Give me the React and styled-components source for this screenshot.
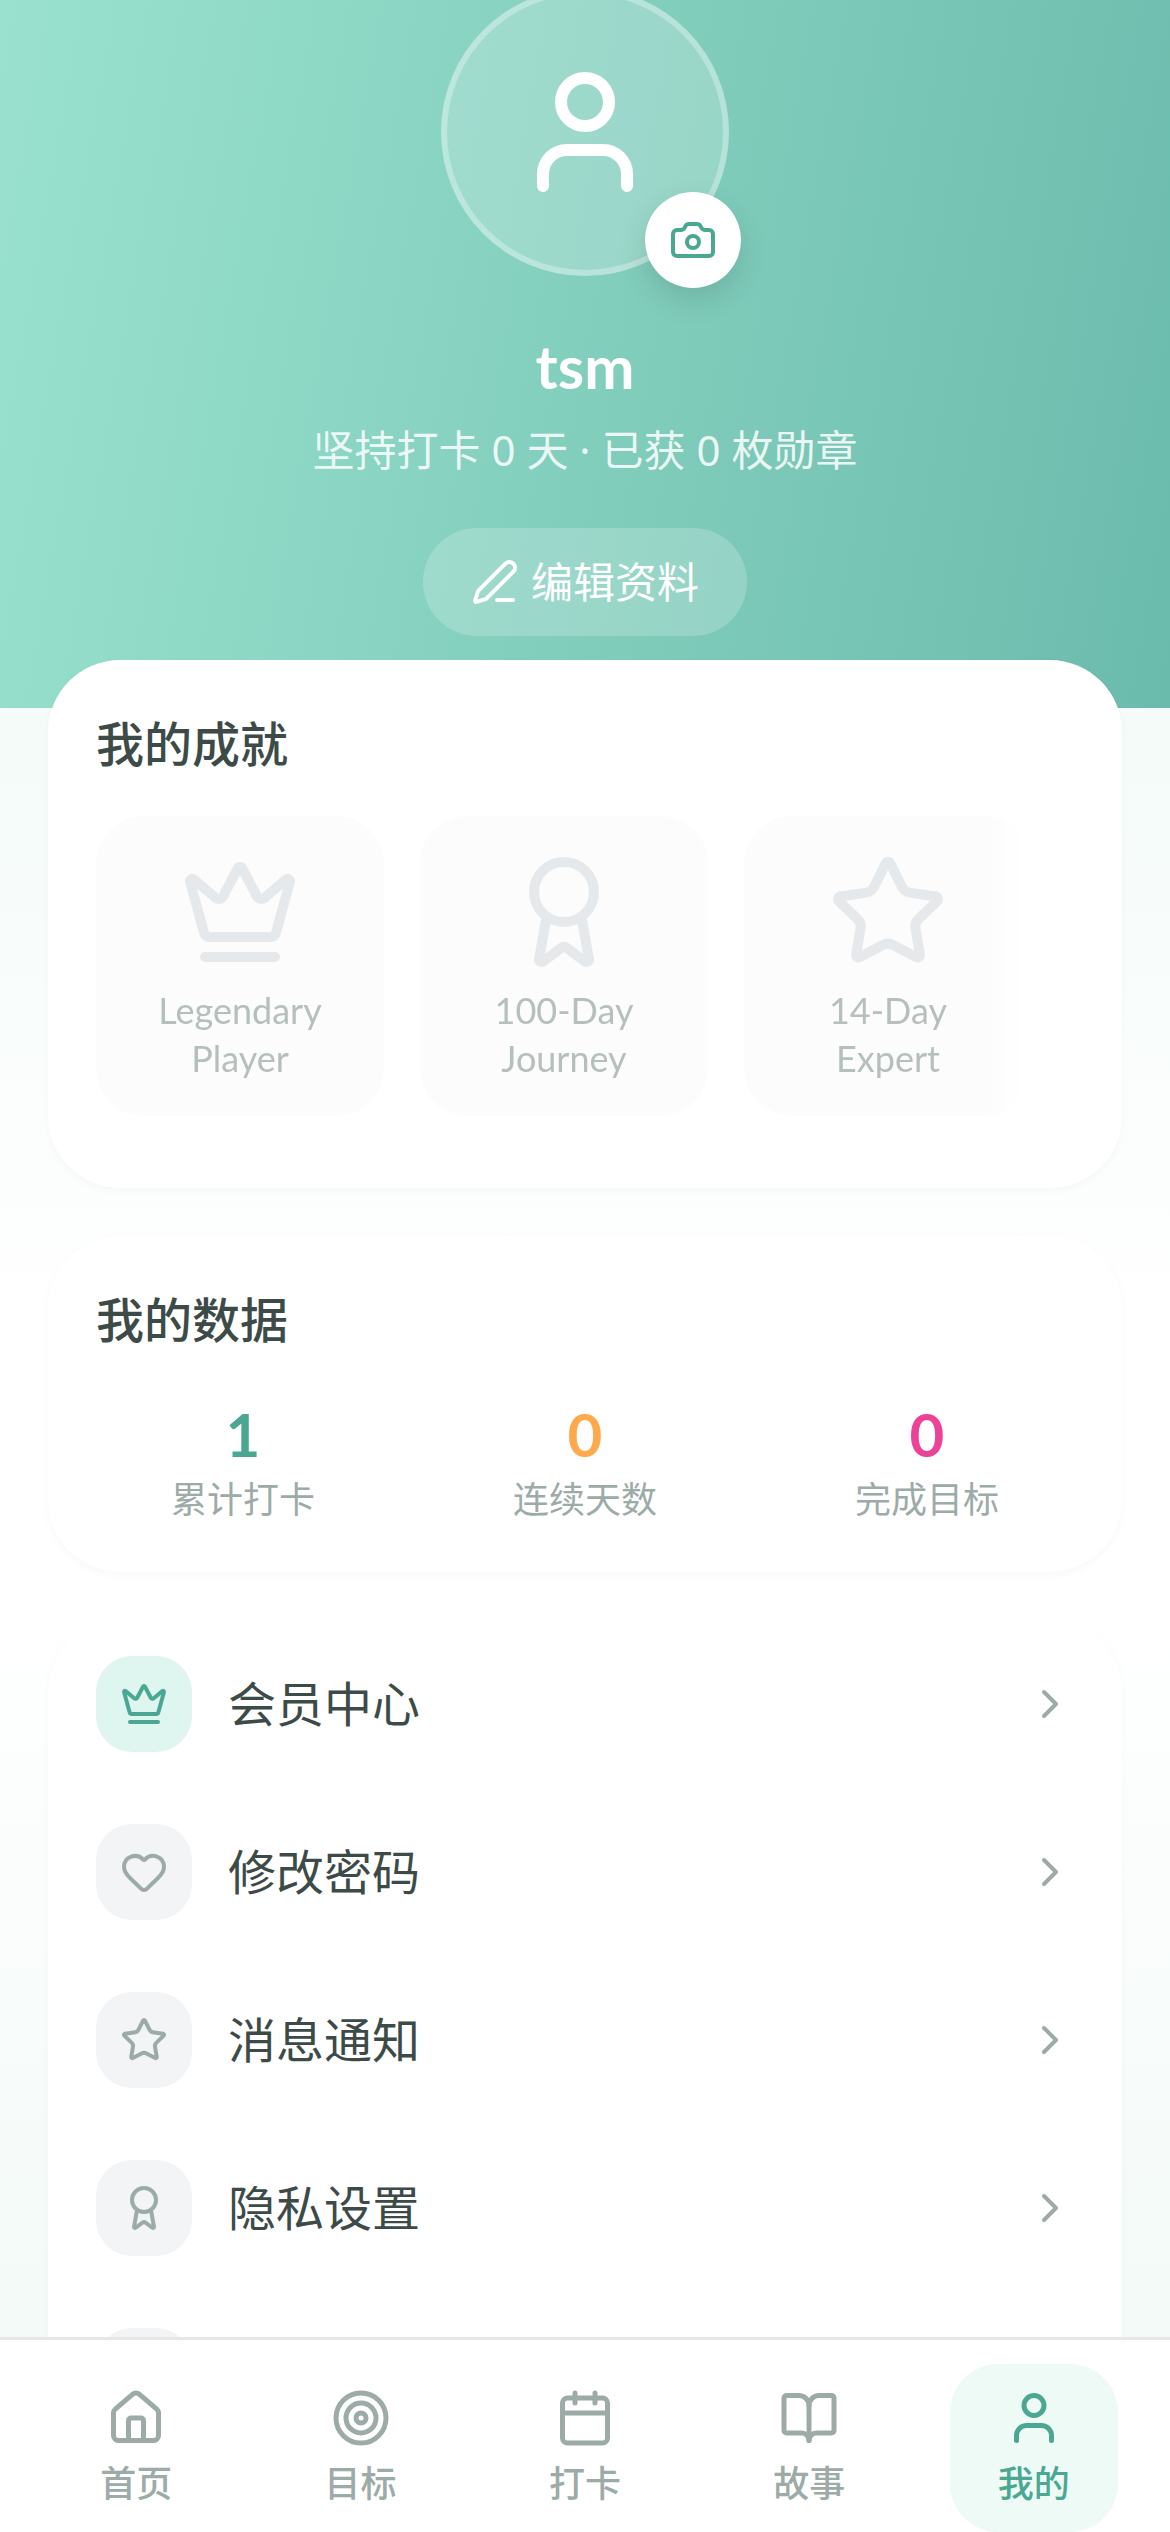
import React from 'react';
import styled, { createGlobalStyle } from 'styled-components';
import { User, Camera, PenLine, Crown, Award, Star, Heart, ChevronRight, House, Target, Calendar, BookOpen } from 'lucide-react';

const Global = createGlobalStyle`
  html, body { margin: 0; padding: 0; background: #fff; }
  body { font-family: "Noto Sans", "Noto Sans CJK SC", sans-serif; }
  * { box-sizing: border-box; }
`;

const Screen = styled.div`
  width: 1170px;
  height: 2532px;
  display: flex;
  flex-direction: column;
  overflow: hidden;
  background: #fff;
`;
const Scroll = styled.main`
  flex: 1;
  min-height: 0;
  overflow: hidden;
  background: linear-gradient(180deg, #f4fbf9 0, #f4fbf9 708px, #fefffe 1300px, #ffffff 1600px, #f3faf8 2337px);
`;
const Hero = styled.header`
  height: 708px;
  padding-bottom: 72px;
  display: flex;
  flex-direction: column;
  align-items: center;
  background: linear-gradient(100deg, #9ae2cf 0%, #6bbbac 100%);
`;
const Avatar = styled.div`
  position: relative;
  flex: none;
  width: 288px;
  height: 288px;
  margin-top: -12px;
  border-radius: 50%;
  border: 6px solid rgba(255,255,255,.3);
  background: rgba(255,255,255,.2);
  display: flex;
  align-items: center;
  justify-content: center;
  color: #fff;
`;
const CameraButton = styled.div`
  position: absolute;
  right: -18px;
  bottom: -18px;
  width: 96px;
  height: 96px;
  border-radius: 50%;
  background: #fff;
  color: #4aa892;
  display: flex;
  align-items: center;
  justify-content: center;
  box-shadow: 0 12px 30px rgba(0,0,0,.12);
`;
const Name = styled.h1`
  margin: 48px 0 0;
  font-family: Lato, "Noto Sans", sans-serif;
  font-size: 60px;
  line-height: 84px;
  font-weight: 700;
  color: #fff;
`;
const Sub = styled.p`
  margin: 12px 0 0;
  font-size: 42px;
  line-height: 60px;
  color: rgba(255,255,255,.85);
  white-space: pre;
`;
const EditButton = styled.button`
  margin-top: 48px;
  height: 108px;
  padding: 0 48px;
  border: 0;
  border-radius: 54px;
  background: rgba(255,255,255,.2);
  color: #fff;
  font: inherit;
  font-size: 42px;
  display: flex;
  align-items: center;
  gap: 12px;
`;
const EditLabel = styled.span`
  margin-top: -6px;
`;
const Cards = styled.div`
  margin-top: -48px;
  padding: 0 48px;
  display: flex;
  flex-direction: column;
  gap: 48px;
`;
const Card = styled.section`
  border-radius: 72px;
  background: #fff;
  padding: ${p => p.$pad || '48px'};
  box-shadow: 0 3px 9px rgba(0,0,0,.03);
`;
const CardTitle = styled.h2`
  margin: 0 0 36px;
  font-size: 48px;
  line-height: 72px;
  font-weight: 500;
  color: #3d4b48;
`;
const BadgeRow = styled.div`
  display: flex;
  gap: 36px;
  padding-bottom: 24px;
  overflow: hidden;
  -webkit-mask-image: linear-gradient(90deg, #000 0, #000 888px, transparent 930px);
  mask-image: linear-gradient(90deg, #000 0, #000 888px, transparent 930px);
`;
const Badge = styled.div`
  flex: none;
  width: 288px;
  height: 300px;
  padding: 36px 48px;
  border-radius: 48px;
  background: #fcfcfd;
  display: flex;
  flex-direction: column;
  align-items: center;
  color: #e6e9ec;
`;
const BadgeIcon = styled.svg`
  flex: none;
`;
const BadgeLabel = styled.div`
  margin-top: 14px;
  font-family: Lato, "Noto Sans", sans-serif;
  font-size: 36px;
  line-height: 48px;
  text-align: center;
  color: #b5c0bd;
`;
const Stats = styled.div`
  display: grid;
  grid-template-columns: repeat(3, 1fr);
  gap: 48px;
  text-align: center;
`;
const StatValue = styled.div`
  font-family: Lato, "Noto Sans", sans-serif;
  font-size: 60px;
  line-height: 84px;
  font-weight: 700;
  color: ${p => p.$color};
`;
const StatLabel = styled.div`
  font-size: 36px;
  line-height: 48px;
  color: #9caba7;
`;
const Menu = styled.div`
  display: flex;
  flex-direction: column;
  gap: 72px;
`;
const MenuRow = styled.div`
  display: flex;
  align-items: center;
  gap: 36px;
  height: 96px;
`;
const MenuIcon = styled.div`
  flex: none;
  width: 96px;
  height: 96px;
  border-radius: 36px;
  display: flex;
  align-items: center;
  justify-content: center;
  background: ${p => p.$active ? '#dff5ef' : '#f3f4f6'};
  color: ${p => p.$active ? '#4aa892' : '#9caba7'};
`;
const MenuText = styled.div`
  flex: 1;
  font-size: 48px;
  line-height: 72px;
  color: #3d4b48;
`;
const Chevron = styled(ChevronRight)`
  flex: none;
  color: #9caba7;
`;
const Nav = styled.nav`
  flex: none;
  height: 195px;
  padding: 24px 24px 0;
  border-top: 3px solid #e5e7eb;
  background: #fff;
  display: flex;
  justify-content: space-around;
`;
const NavItem = styled.div`
  width: 168px;
  height: 168px;
  padding-top: 24px;
  border-radius: 48px;
  display: flex;
  flex-direction: column;
  align-items: center;
  gap: 12px;
  background: ${p => p.$active ? '#edfaf6' : 'transparent'};
  color: ${p => p.$active ? '#4aa892' : '#9caba7'};
`;
const NavLabel = styled.span`
  font-size: 36px;
  line-height: 48px;
  font-weight: 500;
`;

const badges = [
  [Crown, 'Legendary Player'],
  [Award, '100-Day Journey'],
  [Star, '14-Day Expert'],
];
const stats = [
  ['1', '累计打卡', '#4aa892'],
  ['0', '连续天数', '#ffa94d'],
  ['0', '完成目标', '#ec4399'],
];
const menu = [
  [Crown, '会员中心', true],
  [Heart, '修改密码'],
  [Star, '消息通知'],
  [Award, '隐私设置'],
  [Heart, ''],
];
const tabs = [
  [House, '首页'],
  [Target, '目标'],
  [Calendar, '打卡'],
  [BookOpen, '故事'],
  [User, '我的', true],
];

export default function App() {
  return (
    <Screen>
      <Global />
      <Scroll>
        <Hero>
          <Avatar>
            <User size={144} />
            <CameraButton><Camera size={48} /></CameraButton>
          </Avatar>
          <Name>tsm</Name>
          <Sub>坚持打卡 0 天 · 已获 0 枚勋章</Sub>
          <EditButton><PenLine size={48} /><EditLabel>编辑资料</EditLabel></EditButton>
        </Hero>
        <Cards>
          <Card>
            <CardTitle>我的成就</CardTitle>
            <BadgeRow>
              {badges.map(([Icon, label]) => (
                <Badge key={label}>
                  <BadgeIcon as={Icon} size={120} />
                  <BadgeLabel>{label}</BadgeLabel>
                </Badge>
              ))}
            </BadgeRow>
          </Card>
          <Card>
            <CardTitle>我的数据</CardTitle>
            <Stats>
              {stats.map(([v, l, c]) => (
                <div key={l}>
                  <StatValue $color={c}>{v}</StatValue>
                  <StatLabel>{l}</StatLabel>
                </div>
              ))}
            </Stats>
          </Card>
          <Card $pad="36px 48px">
            <Menu>
              {menu.map(([Icon, label, active], i) => (
                <MenuRow key={i}>
                  <MenuIcon $active={active}><Icon size={48} /></MenuIcon>
                  <MenuText>{label}</MenuText>
                  <Chevron size={48} />
                </MenuRow>
              ))}
            </Menu>
          </Card>
        </Cards>
      </Scroll>
      <Nav>
        {tabs.map(([Icon, label, active]) => (
          <NavItem key={label} $active={active}>
            <Icon size={60} />
            <NavLabel>{label}</NavLabel>
          </NavItem>
        ))}
      </Nav>
    </Screen>
  );
}
